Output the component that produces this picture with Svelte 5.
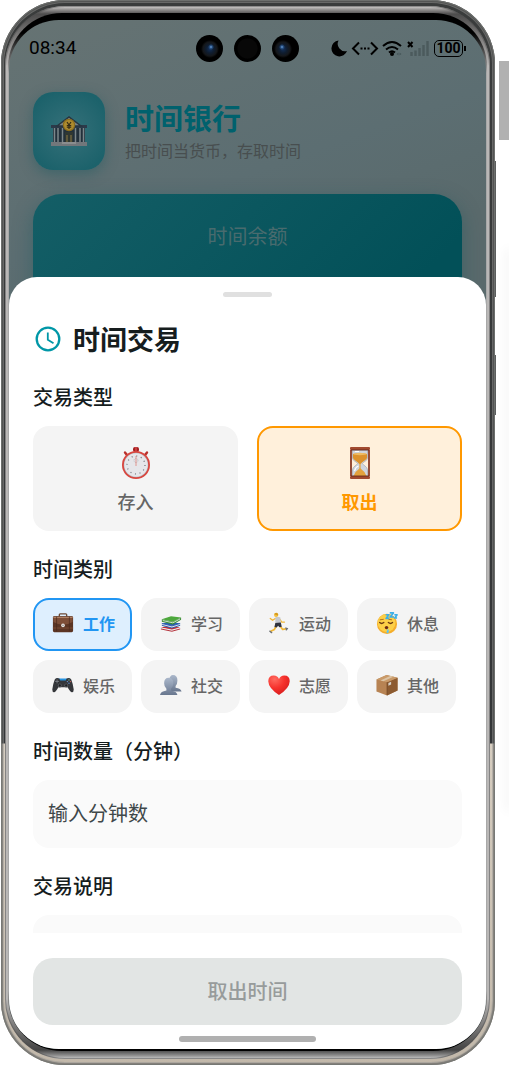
<script>
  let type = $state('out');
  let category = $state('work');
  let minutes = $state('');
  let note = $state('');

  const types = [
    { id: 'in', label: '存入', icon: 'stopwatch' },
    { id: 'out', label: '取出', icon: 'hourglass' }
  ];
  const categories = [
    { id: 'work', label: '工作' },
    { id: 'study', label: '学习' },
    { id: 'sport', label: '运动' },
    { id: 'rest', label: '休息' },
    { id: 'game', label: '娱乐' },
    { id: 'social', label: '社交' },
    { id: 'heart', label: '志愿' },
    { id: 'other', label: '其他' }
  ];
</script>

{#snippet art(name)}
  {#if name === 'stopwatch'}
    <svg class="art big" viewBox="0 0 34 34" aria-hidden="true">
      <path d="M7.500 8.500 6 6.500M26.500 8.500l1.500-2" stroke="#b8302c" stroke-width="2.400" stroke-linecap="round" />
      <rect x="14" y="1" width="6" height="5" rx="2" fill="#a51f22" />
      <path d="M17 1v4" stroke="#e8615a" />
      <circle cx="17" cy="19" r="14" fill="#d8463f" />
      <circle cx="17" cy="19" r="12.200" fill="#b9bcc4" />
      <circle cx="17" cy="19" r="11.700" fill="#e6e6ea" />
      <circle cx="17" cy="19" r="9" fill="none" stroke="#6e7078" stroke-width="1.200" stroke-dasharray="1 3.710" />
      <circle cx="17" cy="14.500" r="2" fill="none" stroke="#9a9ba0" stroke-width=".7" stroke-dasharray=".7 .9" />
      <path d="M17 10v10" stroke="#e08078" stroke-width=".8" />
    </svg>
  {:else if name === 'hourglass'}
    <svg class="art big" viewBox="0 0 34 34" aria-hidden="true">
      <path d="M9.500 4h15v8c0 3-5 4-5 5.500s5 3 5 6.500v6h-15v-6c0-3.500 5-5 5-6.500s-5-2.500-5-5.500z" fill="#cfd5dd" stroke="#a9aeb8" stroke-width=".8" />
      <path d="M10 8q7-2 14 0v3.500c0 2.500-5 4-6 6.500h-2c-1-2.500-6-4-6-6.500z" fill="#dc922c" />
      <ellipse cx="17" cy="8" rx="6.800" ry="1.200" fill="#eebb63" />
      <path d="M10.500 30q2-5 6.500-8 4.500 3 6.500 8z" fill="#e3a23d" />
      <path d="M17 17v7" stroke="#e3a23d" stroke-width="1.200" />
      <path d="M12 5.500h4M11.500 25q1-4 4-5" stroke="#fff" stroke-width="1.200" fill="none" />
      <path d="M8 4v26M26 4v26" stroke="#8a3b26" stroke-width="1.800" />
      <rect x="7" y="1" width="20" height="3" rx="1" fill="#a24a2f" />
      <rect x="7" y="30" width="20" height="3" rx="1" fill="#a24a2f" />
      <path d="M8 4h18M8 30h18" stroke="#5d2317" stroke-width=".8" />
    </svg>
  {:else if name === 'work'}
    <svg class="art" viewBox="0 0 24 24" aria-hidden="true">
      <path d="M8 5V3q0-1 1-1h6q1 0 1 1v2" fill="none" stroke="#6d4a36" stroke-width="1.500" />
      <rect x="1" y="4.500" width="22" height="17.500" rx="1.500" fill="#5b3524" />
      <path d="M1.500 5h21v6q-5 3-10.500 3T1.500 11z" fill="#7d4e37" />
      <path d="M1.500 6h21" stroke="#b58468" />
      <path d="M1 17.500h22" stroke="#7d4e37" />
      <path d="M5 5v16M19 5v16" stroke="#4a291b" stroke-width=".7" />
      <circle cx="12" cy="14.500" r="2" fill="#e2dfdc" />
      <circle cx="12" cy="14.500" r=".7" fill="#77706a" />
    </svg>
  {:else if name === 'study'}
    <svg class="art" viewBox="0 0 24 24" aria-hidden="true">
      <path d="m1 17 9-2 12 2-9 3z" fill="#c72e35" />
      <path d="m1 17 12 2 9-2v1.500L13 21 1 18.500z" fill="#ecebf0" />
      <path d="m1 18.500 12 2.500 9-2.500" fill="none" stroke="#b0222b" stroke-width="1" />
      <path d="m2 12.500 10-2 10 2-9 3z" fill="#2961b4" />
      <path d="m2 12.500 11 2.500 9-2.500v2L13 17.500 2 14.500z" fill="#dfe3ec" />
      <path d="m2 12.500 11 2.700 9-2.700M2 14.500l11 3 9-3" fill="none" stroke="#2456a8" stroke-width="1" />
      <path d="m2 8 10-3.500L23 6l-9 4.500z" fill="#4da83c" />
      <path d="m2 8 12 2.500L23 6v2.500l-9 5L2 10.500z" fill="#3a8b34" />
      <path d="m3 9.300 11 2.500 8-4.300" fill="none" stroke="#d9ead5" stroke-width="1" />
    </svg>
  {:else if name === 'sport'}
    <svg class="art" viewBox="0 0 24 24" aria-hidden="true">
      <path d="M8 7 5 9 2.500 7M13 8l2 3h3" fill="none" stroke="#f0b636" stroke-width="1.400" stroke-linecap="round" stroke-linejoin="round" />
      <path d="m9 15-2 4-4 2M13 15l3 4 3.500-.5" fill="none" stroke="#f0b636" stroke-width="1.900" stroke-linecap="round" stroke-linejoin="round" />
      <path d="M8 6q2.500-1.500 5.500 0l.5 6-6 1z" fill="#c5c9d0" />
      <path d="m8 12 6-.5 1 4.500-2.500.5-1.500-1.500-1.500 2-2.500-.7z" fill="#30333d" />
      <circle cx="8.800" cy="3.300" r="2.300" fill="#f5c242" />
      <path d="M6.800 2.500Q7.500 0 10.200 1q1.500 1 .8 3z" fill="#d69b1d" />
      <path d="m2 21 2 1.500M19.500 17.500l1.500.5-1 1.500" fill="none" stroke="#6c7078" stroke-width="1.500" stroke-linecap="round" />
    </svg>
  {:else if name === 'rest'}
    <svg class="art" viewBox="0 0 24 24" aria-hidden="true">
      <circle cx="12" cy="13" r="11" fill="#f5ae2b" />
      <circle cx="11.500" cy="12" r="9.700" fill="#fdcf47" />
      <path d="M4 11.500q2 2 4.500 0M13.500 11.500q2.500 2 4.500 0" fill="none" stroke="#6c3a12" stroke-width="1.500" stroke-linecap="round" />
      <path d="M4.500 8.500 8 8M14 8l3 .5" stroke="#a9691b" stroke-width="1" stroke-linecap="round" />
      <ellipse cx="11.500" cy="17" rx="1.900" ry="1.800" fill="#6a2713" />
      <path d="M13 18q2 3 .5 5-2 1-2-1.500z" fill="#5cc3f1" />
      <path d="M10.500 3h3.500l-3 4h3.500M15 1h4l-3.500 4.500h4M20 3h3l-2.500 3.500H23" fill="none" stroke="#3cafe8" stroke-width="1.800" stroke-linejoin="round" />
    </svg>
  {:else if name === 'game'}
    <svg class="art" viewBox="0 0 24 24" aria-hidden="true">
      <path d="M7 5h10l1 4H6z" fill="#2492e0" />
      <path d="M3 6q2-2.500 5-1l1 2h6l1-2q3-1.500 5 1 2 5 2.700 11 0 3-2 3-1.700 0-4.700-5.500H7Q4 20 2.300 20q-2 0-2-3Q1 11 3 6z" fill="#34363a" />
      <path d="M4 6.500h3v3H4z" fill="#17181a" />
      <path d="M3.500 8h4M5.500 6v4" stroke="#73777e" stroke-width="1.200" />
      <circle cx="8.500" cy="12.500" r="2.200" fill="#55585e" />
      <circle cx="15.500" cy="12.500" r="2.200" fill="#55585e" />
      <circle cx="8.500" cy="12.500" r="1.200" fill="#1b1c1e" />
      <circle cx="15.500" cy="12.500" r="1.200" fill="#1b1c1e" />
      <circle cx="18.500" cy="6.500" r=".8" fill="#6fae8e" />
      <circle cx="20.200" cy="8.300" r=".8" fill="#c96661" />
      <circle cx="16.800" cy="8.300" r=".8" fill="#6d93d2" />
      <circle cx="18.500" cy="10" r=".8" fill="#5a87cf" />
    </svg>
  {:else if name === 'social'}
    <svg class="art" viewBox="0 0 24 24" aria-hidden="true">
      <defs>
        <linearGradient id="person" x1="0" y1="0" x2="0" y2="1">
          <stop offset="0" stop-color="#abb8cb" />
          <stop offset="1" stop-color="#68768e" />
        </linearGradient>
      </defs>
      <path d="M14 1q5 0 5 6 0 4-2 6v2q6 1 6.500 4H10V6q1-5 4-5z" fill="url(#person)" />
      <path d="M9.500 4q5 0 5 6 0 4-2.500 6v2q6.500 1 7 5H0q.5-4 7-5v-2q-2.500-2-2.500-6 0-6 5-6z" fill="url(#person)" />
    </svg>
  {:else if name === 'heart'}
    <svg class="art" viewBox="0 0 24 24" aria-hidden="true">
      <defs>
        <radialGradient id="red" cx=".3" cy=".2" r=".9">
          <stop offset="0" stop-color="#ff6a5f" />
          <stop offset=".5" stop-color="#f6312c" />
          <stop offset="1" stop-color="#d21a1b" />
        </radialGradient>
      </defs>
      <path d="M12 23Q.5 15.500.3 8 .3 1.500 6.300 1.500 10.500 1.500 12 5.500 13.500 1.500 17.700 1.500q6 0 6 6.500Q23.500 15.500 12 23z" fill="url(#red)" />
    </svg>
  {:else if name === 'other'}
    <svg class="art" viewBox="0 0 24 24" aria-hidden="true">
      <path d="m.5 6 11-5L23.500 4v14L12 23.500.5 19z" fill="#b78353" />
      <path d="m12 9 11.500-5v14L12 23.500z" fill="#8c5b31" />
      <path d="m.5 6 11-5 12 3L12 9z" fill="#c99a69" />
      <path d="m5 7 11-5 3 1L8 8z" fill="#dcc4a5" />
      <path d="M12 9v14" stroke="#6c4320" stroke-width=".7" />
      <path d="m13.500 9.800 3-1.300v3l-3 1.300z" fill="#d5d0c8" />
    </svg>
  {/if}
{/snippet}

<div class="stage">
  <div class="frame">
    <i class="key volume"></i>
    <i class="key power"></i>
    <div class="rim">
      <div class="glass">
        <div class="screen">
          <div class="app">
            <div class="status">
              <time>08:34</time>
              <div class="cameras">
                <i class="lens"></i><i></i><i class="lens"></i>
              </div>
              <div class="indicators">
                <svg width="99" height="20" viewBox="0 0 99 20" fill="none" aria-hidden="true">
                  <path d="M7.500 2.500A8 8 0 1 0 16 13 7.500 7.500 0 0 1 7.500 2.500z" fill="#000" />
                  <path d="m28 4.500-6 6 6 6M40 4.500l6 6-6 6" stroke="#000" stroke-width="2" />
                  <path d="M29.500 10.500h2M33 10.500h2M36.500 10.500h2" stroke="#000" stroke-width="2" />
                  <path d="M52 8q9-8 18 0M55 11.500q6-5 12 0M58 14.500q3-2.500 6 0" stroke="#000" stroke-width="2" />
                  <circle cx="61" cy="16" r="2" fill="#000" />
                  <path d="m65.500 16 2-1.500v3zM70.500 16l-2-1.500v3z" fill="#46575a" />
                  <path d="m77 4 4.500 5M81.500 4 77 9" stroke="#000" stroke-width="2" />
                  <path d="M80.500 14v4M84.500 12.500V18M88.500 10v8M92.500 7v11M96.500 3v15" stroke="#4b5a5c" stroke-width="2.400" />
                </svg>
                <span class="battery">100</span>
              </div>
            </div>
            <header>
              <div class="logo">
                <svg width="38" height="34" viewBox="0 0 38 34" aria-hidden="true">
                  <path d="M1 11h36v3H1z" fill="#2c3a4a" />
                  <path d="M3 14h32v15H3z" fill="#22303b" />
                  <path d="M7 12 19 3l12 9z" fill="#7b8589" stroke="#273641" stroke-width="1.500" />
                  <path d="M4.500 14v14M8 14v14M12.500 14v14M25.500 14v14M30 14v14M33.500 14v14" stroke="#7c878b" stroke-width="1.500" />
                  <path d="M15 18h8v11h-8z" fill="#2f3732" />
                  <path d="M17 21v8M21 21v8" stroke="#6f653f" stroke-width="1.500" />
                  <circle cx="19" cy="11" r="6.200" fill="#8c6d1c" />
                  <circle cx="19" cy="11" r="5" fill="#ad8b2f" />
                  <path d="m17 8 2 3 2-3M16.800 11.500h4.400M16.800 13.200h4.400M19 11v4" fill="none" stroke="#342c17" stroke-width="1.200" />
                  <path d="M1 28h36v4H1z" fill="#72777b" />
                  <path d="M12 28h14v2H12z" fill="#8a8d8e" />
                </svg>
              </div>
              <div>
                <h1>时间银行</h1>
                <p>把时间当货币，存取时间</p>
              </div>
            </header>
            <section class="balance">时间余额</section>
          </div>

          <form class="sheet" onsubmit={(e) => e.preventDefault()}>
            <i class="handle"></i>
            <h2>
              <svg width="26" height="26" viewBox="0 0 26 26" fill="none" stroke="#0097a7" stroke-width="2.300" aria-hidden="true">
                <circle cx="13" cy="13" r="11.300" />
                <path d="M12.800 6.500v7.200l5.700 3.600" stroke-width="1.800" />
              </svg>
              时间交易
            </h2>

            <div class="fields">
              <h3>交易类型</h3>
              <div class="types">
                {#each types as t}
                  <button type="button" class:active={type === t.id} onclick={() => (type = t.id)}>
                    {@render art(t.icon)}
                    <span>{t.label}</span>
                  </button>
                {/each}
              </div>

              <h3>时间类别</h3>
              <div class="chips">
                {#each categories as c}
                  <button type="button" class:active={category === c.id} onclick={() => (category = c.id)}>
                    {@render art(c.id)}
                    <span>{c.label}</span>
                  </button>
                {/each}
              </div>

              <label for="minutes">时间数量（分钟）</label>
              <input id="minutes" inputmode="numeric" placeholder="输入分钟数" bind:value={minutes} />

              <label for="note">交易说明</label>
              <input id="note" bind:value={note} />
            </div>

            <button class="submit" disabled={!minutes}>取出时间</button>
            <i class="home"></i>
          </form>
        </div>
      </div>
    </div>
  </div>
  <div class="edge">
    <i class="thumb"></i>
    <i class="shade"></i>
  </div>
</div>

<style>
  :global(body) {
    background: #fff;
  }
  * {
    box-sizing: border-box;
  }
  i {
    display: block;
  }
  h1, h2, h3, p {
    margin: 0;
  }
  button, input {
    font: inherit;
    border: 0;
    margin: 0;
  }
  .stage {
    display: flex;
    height: 100vh;
    padding-left: 1px;
    overflow: hidden;
    font-family: "Noto Sans CJK SC", sans-serif;
    color: #161d1e;
  }

  /* Device body, from the outer band inwards */
  .frame {
    position: relative;
    display: flex;
    flex: 1;
    min-width: 0;
    padding: 6px 5px 6px 4px;
    border-radius: 64px;
    background: linear-gradient(#3a3c3c 0, #343638 743px, #d6cdc0 744px, #c2b8aa 100%);
    box-shadow:
      inset 0 0 0 1px rgba(115, 117, 115, 0.8),
      inset 0 0 0 2px rgba(40, 40, 40, 0.3),
      inset 0 0 0 3px rgba(150, 150, 148, 0.5);
  }
  .key {
    position: absolute;
    right: -1px;
    width: 1px;
    background: #5c5e5e;
  }
  .volume {
    top: 161px;
    height: 136px;
  }
  .power {
    top: 355px;
    height: 60px;
  }
  .rim {
    display: flex;
    flex: 1;
    min-width: 0;
    padding: 7px 3px 8px;
    border-radius: 60px;
    background: linear-gradient(#d6d4d3 0, #8d8b8a 4px, #4d4c4c 8px, #b9b7b6 60px, #b9b7b6 calc(100% - 60px), #444 calc(100% - 9px), #888 calc(100% - 4px), #c9c9c9 100%);
    box-shadow: inset 0 0 0 1px rgba(80, 80, 80, 0.5);
  }
  .glass {
    display: flex;
    flex: 1;
    min-width: 0;
    padding: 7px 1px 2px;
    border-radius: 54px;
    background: linear-gradient(#000 0, #000 20px, #a8a8a8 60px, #a8a8a8 calc(100% - 60px), #000 calc(100% - 20px));
  }
  .screen {
    display: grid;
    grid-template: minmax(0, 1fr) / minmax(0, 1fr);
    flex: 1;
    min-width: 0;
    overflow: hidden;
    border-radius: 50px;
    background: linear-gradient(160deg, #667373 0, #5c6e72 20%, #5a6a6c 30%);
  }
  .app, .sheet {
    grid-area: 1 / 1;
  }

  /* Dimmed page behind the sheet */
  .app {
    padding: 0 24px;
  }
  .status {
    display: grid;
    grid-template-columns: 1fr auto 1fr;
    align-items: center;
    height: 56px;
    margin: 0 -4px;
    color: #000;
  }
  time {
    font: 400 19px/24px Roboto, sans-serif;
  }
  .cameras {
    display: flex;
    gap: 11px;
  }
  .cameras i {
    width: 27px;
    height: 27px;
    border-radius: 50%;
    background: radial-gradient(circle, #080808 50%, #000 55%);
  }
  .cameras .lens {
    background:
      radial-gradient(circle at 15px 12px, #9fc7f0 0, #2c5b94 1px, transparent 3px),
      radial-gradient(circle at 14px 14px, #14305a 0, #0f1d30 4px, #15171a 7px, #000 9px);
  }
  .cameras .lens:last-child {
    background:
      radial-gradient(circle at 10px 12px, #9fc7f0 0, #2c5b94 1px, transparent 3px),
      radial-gradient(circle at 11px 14px, #14305a 0, #0f1d30 4px, #15171a 7px, #000 9px);
  }
  .indicators {
    display: flex;
    justify-content: flex-end;
    align-items: center;
    gap: 4px;
  }
  .indicators svg {
    flex: none;
  }
  .battery {
    position: relative;
    width: 29px;
    height: 17px;
    margin-right: 3px;
    border: 1px solid #000;
    border-radius: 5px;
    font: 700 14px/15px Roboto, sans-serif;
    text-align: center;
  }
  .battery::after {
    content: "";
    position: absolute;
    top: 5px;
    right: -4px;
    width: 2px;
    height: 5px;
    background: #000;
  }
  header {
    display: flex;
    align-items: center;
    gap: 20px;
    margin-top: 16px;
  }
  .logo {
    display: grid;
    place-items: center;
    width: 72px;
    height: 78px;
    border-radius: 20px;
    background: radial-gradient(circle, #36717a 0, #1c626b 80%);
    box-shadow: 0 4px 14px rgba(0, 80, 90, 0.35);
  }
  h1 {
    font-size: 29px;
    line-height: 34px;
    font-weight: 700;
    color: #00616d;
  }
  header p {
    margin-top: 4px;
    font-size: 16px;
    line-height: 24px;
    color: #484e4f;
  }
  .balance {
    height: 200px;
    margin-top: 24px;
    padding-top: 28px;
    border-radius: 28px;
    background: linear-gradient(135deg, #145e66, #025058 75%);
    box-shadow: 0 6px 20px rgba(0, 80, 88, 0.35);
    font-size: 20px;
    line-height: 28px;
    text-align: center;
    color: #496b6e;
  }

  /* Bottom sheet */
  .sheet {
    display: flex;
    flex-direction: column;
    min-height: 0;
    margin-top: 257px;
    padding: 15px 24px 7px;
    border-radius: 28px 28px 0 0;
    background: #fff;
  }
  .handle {
    flex: none;
    align-self: center;
    width: 49px;
    height: 5px;
    border-radius: 3px;
    background: #e0e0e0;
  }
  h2 {
    display: flex;
    align-items: center;
    gap: 12px;
    margin-top: 24px;
    padding-left: 2px;
    font-size: 27px;
    line-height: 36px;
    font-weight: 700;
  }
  .fields {
    display: flex;
    flex-direction: column;
    flex: 1;
    min-height: 0;
    margin-top: 26px;
    overflow: hidden;
  }
  h3, label {
    flex: none;
    margin-bottom: 15px;
    font-size: 20px;
    line-height: 28px;
    font-weight: 500;
  }
  .types {
    display: grid;
    grid-template-columns: 1fr 1fr;
    flex: none;
    gap: 19px;
    margin-bottom: 24px;
  }
  .types button, .chips button {
    display: flex;
    align-items: center;
    justify-content: center;
    border: 2px solid #f4f4f4;
    border-radius: 16px;
    background: #f4f4f4;
    color: #666;
    font-weight: 500;
  }
  .types button {
    flex-direction: column;
    gap: 8px;
    height: 105px;
    padding: 2px 0 0;
    font-size: 18px;
    line-height: 26px;
  }
  .types .active {
    border-color: #ff9800;
    background: #fff0db;
    color: #ff9800;
    font-weight: 700;
  }
  .chips {
    display: flex;
    flex-wrap: wrap;
    flex: none;
    gap: 9px;
    margin-bottom: 24px;
  }
  .chips button {
    gap: 9px;
    height: 53px;
    padding: 0 15px 3px 17px;
    font-size: 16px;
    line-height: 24px;
  }
  .chips .active {
    border-color: #2196f3;
    background: #deeffe;
    color: #2196f3;
    font-weight: 700;
  }
  .art {
    flex: none;
    width: 22px;
    height: 22px;
    fill: none;
  }
  .art.big {
    width: 34px;
    height: 34px;
  }
  input {
    flex: none;
    width: 100%;
    height: 68px;
    margin-bottom: 24px;
    padding: 0 15px 3px;
    border-radius: 16px;
    background: #fafafa;
    font-size: 20px;
    color: #161d1e;
  }
  input::placeholder {
    color: #3f484a;
    opacity: 1;
  }
  .submit {
    flex: none;
    height: 67px;
    margin-top: 25px;
    padding: 0 0 3px;
    border-radius: 20px;
    background: #e2e5e4;
    font-size: 20px;
    font-weight: 500;
    color: #979b9b;
  }
  .home {
    flex: none;
    align-self: center;
    width: 137px;
    height: 6px;
    margin-top: 11px;
    border-radius: 3px;
    background: #b0b0b0;
  }

  /* Strip beside the device */
  .edge {
    display: flex;
    flex-direction: column;
    flex: none;
    width: 10px;
    margin-left: 4px;
    padding-top: 61px;
  }
  .thumb {
    height: 79px;
    background: #b1b1b1;
  }
  .shade {
    height: 560px;
    margin-top: 110px;
    margin-left: 10px;
    box-shadow: 0 0 12px 1px rgba(0, 0, 0, 0.16);
  }
</style>
